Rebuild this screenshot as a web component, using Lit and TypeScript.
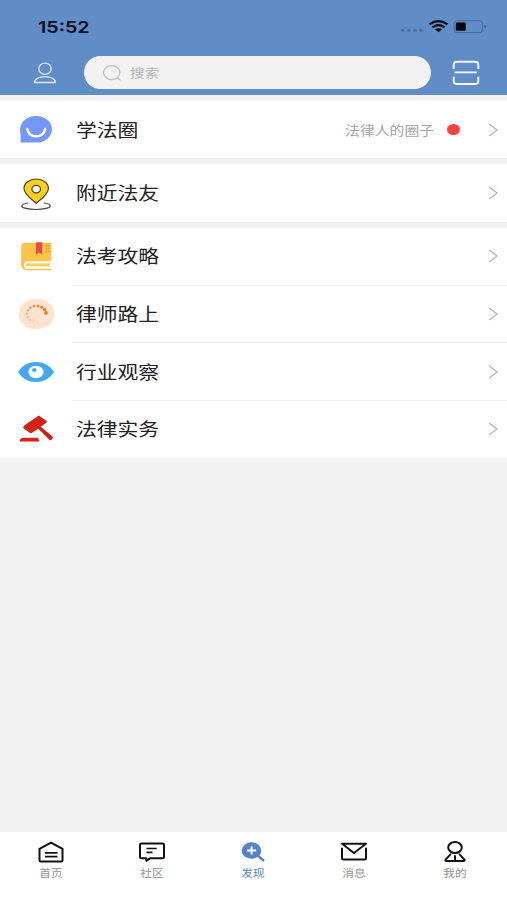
import { LitElement, html, css, svg } from "lit";
import { customElement } from "lit/decorators.js";
import { classMap } from "lit/directives/class-map.js";

const box = (w: number, h: number, body: unknown) =>
  html`<svg width=${w} height=${h} viewBox="0 0 ${w} ${h}" fill="none">${body}</svg>`;

// Ring of dots that grow and darken clockwise from the bottom.
const dots = Array.from({ length: 12 }, (_, i) => {
  const a = ((85 + i * 24.3) * Math.PI) / 180;
  return { x: 18.5 + 9.6 * Math.cos(a), y: 16 + 8.2 * Math.sin(a), r: 0.6 + i * 0.115, o: 0.35 + i * 0.055 };
});

const icons = {
  chat: box(36, 30, svg`
    <path d="M18 1C27 1 34 6.500 34 14.200S27 27.600 18 27.600H2.600V19.500C2.200 18 2 16 2.200 14 2.700 6.500 9 1 18 1Z" fill="#7598f6"/>
    <path d="M9.200 13.800c.8 5 4.500 7.600 9 7.600s8.200-2.600 9-7.600" stroke="#fff" stroke-width="2.300" stroke-linecap="round"/>`),
  pin: box(36, 34, svg`
    <path d="M9.500 26C6 26.700 3.800 27.700 3.800 28.900c0 2 6.300 3.600 14.200 3.600s14.200-1.600 14.200-3.600c0-1.200-2.200-2.200-5.700-2.900" stroke="#444" stroke-width="1.200" stroke-linecap="round"/>
    <path d="M18.200 26.200C14 22.500 6 17.500 6 11.500 6 5.900 11.400 2 18.200 2s12.200 3.900 12.200 9.500c0 6-8 11-12.200 14.700Z" fill="#fbd01f" stroke="#494322" stroke-width="1.200"/>
    <ellipse cx="18.200" cy="12.100" rx="4.300" ry="3.700" fill="#fff" stroke="#494322" stroke-width="1.200"/>`),
  book: box(36, 32, svg`
    <path d="M6.500 1.800H33.500V18H9.500C6 18 4.800 20 3.200 23V4.800C3.200 2.800 4.500 1.800 6.500 1.800Z" fill="#fac54a"/>
    <path d="M33.500 17.500V20.200H10C7.400 20.200 5.800 21.800 5.800 24S7.400 27.800 10 27.800H33.500V29.200H9.500C5.500 29.200 3.200 27.500 3.200 23.800V20L6 17.500Z" fill="#fac54a"/>
    <path d="M10 22.200H32V25.600H10Q7.800 25.600 7.800 23.900T10 22.200Z" fill="#fbd06a"/>
    <path d="M18 1.200H24.200V13.800L21.100 11.600 18 13.800Z" fill="#ef4848"/>
    <path d="M27.500 4.500h4m-4 3h4m-4 3h4" stroke="#dc9c20" stroke-width="1.700" stroke-dasharray="1.700 .6"/>`),
  ring: box(37, 32, svg`
    <ellipse cx="18.500" cy="16" rx="18" ry="15.200" fill="#fde3d0"/>
    ${dots.map((d) => svg`<circle cx=${d.x} cy=${d.y} r=${d.r} fill="#ec7614" opacity=${d.o}/>`)}`),
  eye: box(38, 24, svg`
    <path d="M1 12C5 5.300 11.500 2 19 2s14 3.300 18 10c-4 6.700-10.500 10-18 10S5 18.700 1 12Z" fill="#41a9f2"/>
    <ellipse cx="19" cy="12" rx="7.600" ry="6.200" fill="#fff"/>
    <ellipse cx="17.300" cy="9.900" rx="2.300" ry="1.900" fill="#41a9f2"/>`),
  gavel: box(38, 30, svg`
    <path d="M21.800 1.400 30 7.300 28.400 9.600 23.800 12.700 35.600 22.600C36.600 23.800 34.500 27.200 32.600 26L21.300 14.700 13.800 19.600 5.800 13.800 7.800 11 19 3.600Z" fill="#d22312"/>
    <path d="M5 23.800H21L22.500 27.600H2.400Q3 25 5 23.800Z" fill="#d22312"/>`),
  home: box(28, 24, svg`
    <path d="M2.500 8.800 14 2.600 25.500 8.800V20.200Q25.500 21.500 24 21.500H4Q2.500 21.500 2.500 20.200Z" stroke="#111" stroke-width="2" stroke-linejoin="round"/>
    <path d="M8 12.900H20.500M8 16.600H20.500" stroke="#111" stroke-width="1.700"/>`),
  comment: box(28, 24, svg`
    <path d="M3.500 3.400H24.500Q26 3.400 26 4.800V16.900Q26 18.300 24.500 18.300H12L8.300 20.800V18.300H3.500Q2 18.300 2 16.900V4.800Q2 3.400 3.500 3.400Z" stroke="#111" stroke-width="2" stroke-linejoin="round"/>
    <path d="M8.500 8.500H18.700M8.500 12.300H14.500" stroke="#111" stroke-width="1.700"/>`),
  find: box(28, 24, svg`
    <path d="M18 15 24.200 20.300" stroke="#5385c5" stroke-width="2.500" stroke-linecap="round"/>
    <ellipse cx="12.500" cy="10.500" rx="9.800" ry="8.200" fill="#5385c5"/>
    <path d="M8 10.500h9.200M12.600 6.600v7.800" stroke="#fff" stroke-width="2"/>`),
  mail: box(28, 24, svg`
    <path d="M2 8.500V17.900Q2 19.400 3.600 19.400H24.400Q26 19.400 26 17.900V8.500" stroke="#111" stroke-width="2" stroke-linecap="round"/>
    <path d="M2 3.700H26L14 12.900Z" stroke="#111" stroke-width="1.900" stroke-linejoin="round"/>`),
  me: box(28, 24, svg`
    <ellipse cx="14" cy="7.500" rx="6.800" ry="5.500" stroke="#111" stroke-width="2"/>
    <path d="M9.400 14.300 4.500 19.700Q4 20.800 5.500 20.900H22.500Q24 20.800 23.500 19.700L18.600 14.300M14 16V20" stroke="#111" stroke-width="2" stroke-linecap="round"/>`),
};

const chevron = box(12, 14, svg`<path d="M2 1 10.100 7 2 13" stroke="#b4b4b4" stroke-width="1.300"/>`);

type Entry = { icon: keyof typeof icons; label: string; note?: string };

const groups: Entry[][] = [
  [{ icon: "chat", label: "学法圈", note: "法律人的圈子" }],
  [{ icon: "pin", label: "附近法友" }],
  [
    { icon: "book", label: "法考攻略" },
    { icon: "ring", label: "律师路上" },
    { icon: "eye", label: "行业观察" },
    { icon: "gavel", label: "法律实务" },
  ],
];

const tabs: Entry[] = [
  { icon: "home", label: "首页" },
  { icon: "comment", label: "社区" },
  { icon: "find", label: "发现" },
  { icon: "mail", label: "消息" },
  { icon: "me", label: "我的" },
];

@customElement("app-root")
export class AppRoot extends LitElement {
  static styles = css`
    :host {
      display: flex;
      flex-direction: column;
      height: 900px;
      background: #f2f2f2;
      font-family: "Liberation Sans", "Noto Sans CJK SC", sans-serif;
    }
    * { box-sizing: border-box; }
    svg { display: block; flex: none; }
    header { height: 95px; background: #608dc6; }
    .status {
      height: 52px;
      padding: 2px 20px 0 38px;
      display: flex;
      align-items: center;
      justify-content: space-between;
    }
    .status svg { margin-top: 2px; }
    .time {
      font: 600 16.5px/20px Inter, sans-serif;
      color: #080c18;
      transform: scaleX(1.19);
      transform-origin: left;
    }
    .tools { display: flex; align-items: center; height: 41px; }
    .user { width: 84px; padding-left: 33px; }
    .search {
      width: 347px;
      height: 33px;
      border-radius: 17px;
      background: #f2f2f2;
      display: flex;
      align-items: center;
      padding-left: 18px;
      gap: 8px;
      font-size: 12.5px;
      color: #b5b5b5;
    }
    .wide {
      white-space: nowrap;
      transform: scaleX(1.17);
      transform-origin: left;
    }
    .scan { padding-left: 20.500px; }
    main { flex: 1; padding-top: 6px; }
    .group { background: #fff; margin-bottom: 6px; }
    .row { display: flex; align-items: center; height: 57.350px; }
    .icon { width: 72px; display: flex; justify-content: center; flex: none; padding-top: 1px; }
    .body {
      flex: 1;
      height: 100%;
      display: flex;
      align-items: center;
      padding: 0 8px 0 4px;
    }
    .row + .row .body { border-top: 1px solid #f0f0f0; }
    .label { font-size: 18px; line-height: 26px; color: #222; flex: 1; padding-top: 2px; }
    .label span, .search span { display: inline-block; }
    .label .wide { transform: scaleX(1.155); }
    .note {
      font-size: 12.7px;
      color: #a4a4a4;
      transform-origin: right;
    }
    .dot {
      width: 13px;
      height: 11px;
      border-radius: 50%;
      background: #fb4341;
      margin: 0 27px 0 13px;
    }
    nav { height: 68px; background: #fff; display: flex; padding: 8px 1px 0 0; }
    .tab { flex: 1; display: flex; flex-direction: column; align-items: center; }
    .tab .wide {
      font-size: 10px;
      line-height: 15px;
      margin-top: 2px;
      color: #929292;
      transform-origin: center;
    }
    .tab.active .wide { color: #5385c5; }
  `;

  private row(e: Entry) {
    return html`<div class="row">
      <div class="icon">${icons[e.icon]}</div>
      <div class="body">
        <div class="label"><span class="wide">${e.label}</span></div>
        ${e.note ? html`<span class="note wide">${e.note}</span><i class="dot"></i>` : ""}
        ${chevron}
      </div>
    </div>`;
  }

  render() {
    return html`
      <header>
        <div class="status">
          <span class="time">15:52</span>
          ${box(88, 16, svg`
            <g fill="#4b70a2"><circle cx="3.500" cy="10.300" r="1.700"/><circle cx="9.800" cy="10.300" r="1.700"/><circle cx="16" cy="10.300" r="1.700"/><circle cx="22" cy="10.300" r="1.700"/></g>
            <g stroke="#080c18" stroke-width="2.200"><path d="M30.500 4.400Q39.500-2 48.500 4.400"/><path d="M33.500 7.300Q39.500 3 45.500 7.300"/></g>
            <path d="M36 9.300Q39.500 7 43 9.300L39.500 12.200Z" fill="#080c18"/>
            <rect x="55.100" y=".7" width="28.500" height="11.800" rx="3.500" stroke="#456b9f" stroke-width="1.100"/>
            <rect x="56.800" y="2.400" width="10" height="8.400" rx="1.300" fill="#05070d"/>
            <path d="M85.200 4.600q2 .4 2 2t-2 2Z" fill="#456b9f"/>`)}
        </div>
        <div class="tools">
          <div class="user">${box(24, 22, svg`
            <g stroke="#dfe9f5" stroke-width="1.300"><ellipse cx="12" cy="6.800" rx="6.200" ry="5.600"/><path d="M1.500 20.500C1.500 17 6 14.700 12 14.700s10.500 2.300 10.500 5.800Z" stroke-linejoin="round"/></g>`)}</div>
          <div class="search">
            ${box(20, 18, svg`<ellipse cx="9.700" cy="8.600" rx="8.200" ry="7" stroke="#bcbcbc" stroke-width="1.200"/><path d="M15 13.800 18.500 16.200" stroke="#bcbcbc" stroke-width="1.300"/>`)}
            <span class="wide">搜索</span>
          </div>
          <div class="scan">${box(28, 26, svg`
            <path d="M1.700 9V4.500Q1.700 1.700 5 1.700H23Q26.300 1.700 26.300 4.500V9M1.700 16.800V21.200Q1.700 24 5 24H23Q26.300 24 26.300 21.200V16.800M2.500 12.400H24.800" stroke="#f5f8fc" stroke-width="1.900"/>`)}</div>
        </div>
      </header>
      <main>${groups.map((g) => html`<section class="group">${g.map((e) => this.row(e))}</section>`)}</main>
      <nav>
        ${tabs.map((t) => html`<div class=${classMap({ tab: true, active: t.icon === "find" })}>
          ${icons[t.icon]}<span class="wide">${t.label}</span>
        </div>`)}
      </nav>
    `;
  }
}
